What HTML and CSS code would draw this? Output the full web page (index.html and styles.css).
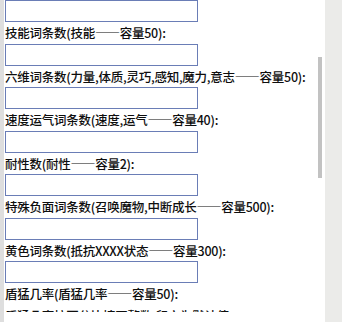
FILE: index.html
```html
<!doctype html>
<html lang="zh-CN">
<head>
<meta charset="utf-8">
<title>词条容量设置</title>
<link rel="stylesheet" href="styles.css">
</head>
<body>

<div class="frame">
  <div class="edge"></div>

  <!-- settings panel -->
  <div class="panel">
    <form class="scroll" id="capacity-form">
      <label class="field">词条名称:<input type="text"></label>
      <label class="field">词条描述:<input type="text"></label>
      <label class="field">基础词条数(基础——容量50):<input type="text"></label>
      <label class="field">属性词条数(属性——容量50):<input type="text"></label>
      <label class="field">技能词条数(技能——容量50):<input type="text"></label>
      <label class="field">六维词条数(力量,体质,灵巧,感知,魔力,意志——容量50):<input type="text"></label>
      <label class="field">速度运气词条数(速度,运气——容量40):<input type="text"></label>
      <label class="field">耐性数(耐性——容量2):<input type="text"></label>
      <label class="field">特殊负面词条数(召唤魔物,中断成长——容量500):<input type="text"></label>
      <label class="field">黄色词条数(抵抗XXXX状态——容量300):<input type="text"></label>
      <div class="field">
        <span>盾猛几率(盾猛几率——容量50):</span>
        <span class="note">盾猛几率按百分比填写整数,留空为默认值</span>
        <input type="text">
      </div>
      <label class="field">附加伤害词条数(附加伤害——容量50):<input type="text"></label>
      <label class="field">抗性词条数(抗性——容量50):<input type="text"></label>
      <div class="actions"><button type="button">保存</button></div>
    </form>
    <div class="thumb"></div>
  </div>

  <div class="side"></div>
</div>

<script src="script.js"></script>
</body>
</html>
```

FILE: styles.css
```css
:root{
  --bg:     #ebebe9;   /* window chrome */
  --edge:   #dedede;   /* left strip */
  --panel:  #fff;
  --txt:    #0e0e0e;
  --line:   #6a7db6;   /* input borders */
  --thumb:  #c2c2c2;
}

* {
  box-sizing: border-box;
  margin: 0;
  padding: 0;
}
html, body {
  height: 100%;
}
body {
  font-family: 'Noto Sans CJK SC', 'Noto Sans', sans-serif;
  font-size: 12.5px;
  font-weight: 500;
  letter-spacing: -0.25px;
  color: var(--txt);
  background: var(--bg);
  overflow: hidden;
}

/* ── frame ─────────────────────────────────────────────────────── */
.frame {
  display: flex;
  height: 100%;
}
.edge {
  width: 4px;
  background: var(--edge);
}
.panel {
  position: relative;
  width: 321px;
  background: var(--panel);
}
.side {
  flex: 1;
  background: var(--bg);
}

/* ── scrolling form ────────────────────────────────────────────── */
.scroll {
  display: block;
  height: 312px;
  overflow: hidden;
  padding: 4px 0 120px 1px;
}

/* scrollbar thumb, drawn over the panel edge */
.thumb {
  position: absolute;
  top: 57px;
  right: 3px;
  width: 4px;
  height: 121px;
  background: var(--thumb);
}

.field {
  display: block;
  line-height: 21.5px;
  white-space: nowrap;
}
.field span {
  display: block;
}
.field input {
  display: block;
  width: 193px;
  height: 22px;
  border: 1px solid var(--line);
  background: #fff;
  font: inherit;
  padding: 0 3px;
  outline: none;
}
.actions {
  padding-top: 10px;
}
.actions button {
  font: inherit;
  padding: 2px 14px;
}
```

FILE: script.js
```js
document.getElementById('capacity-form').scrollTop = 156;
```
